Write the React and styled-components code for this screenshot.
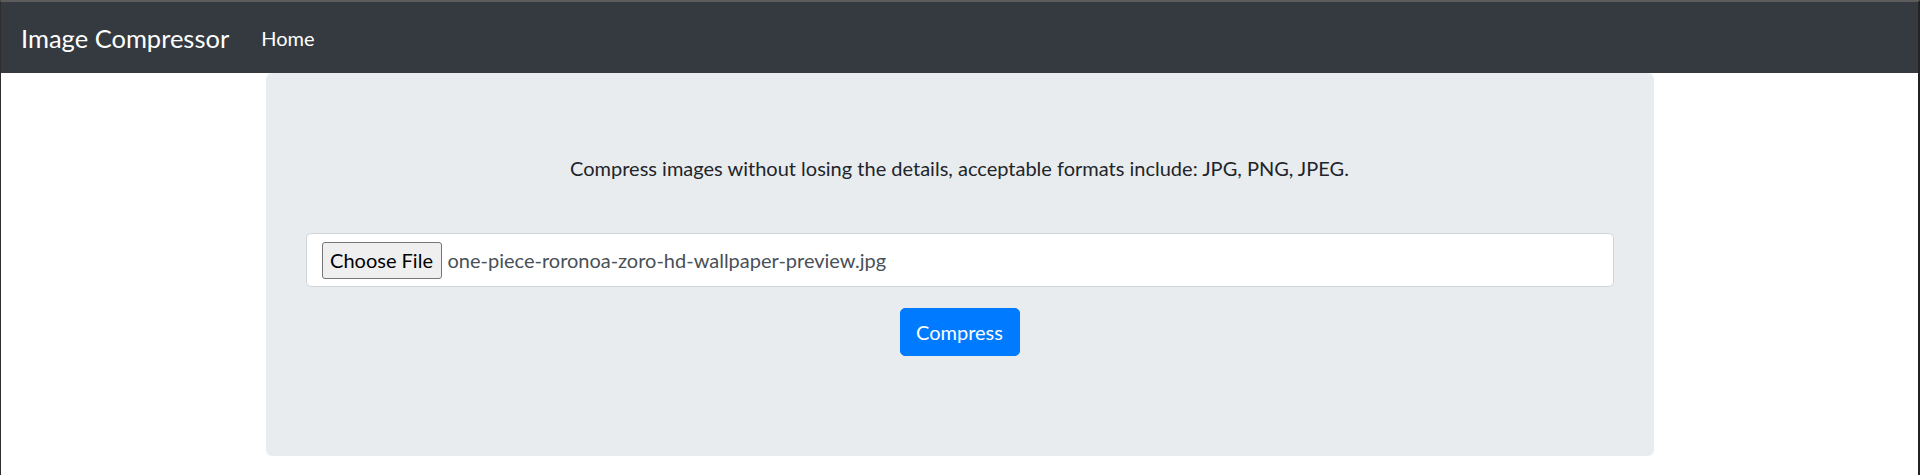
import React from 'react';
import styled, { createGlobalStyle } from 'styled-components';

const GlobalStyle = createGlobalStyle`
  html, body {
    margin: 0;
    background: #fff;
  }
  body {
    font-family: Lato, "Noto Sans", sans-serif;
    color: #212529;
  }
`;

const Frame = styled.div`
  box-sizing: border-box;
  min-height: 100vh;
  border-top: 2px solid #5c5c5c;
  border-left: 1px solid #2e2e2e;
  border-right: 2px solid #232323;
`;

const Navbar = styled.nav`
  display: flex;
  align-items: center;
  height: 71px;
  padding: 0 20px;
  background-color: #343a40;
`;

const Brand = styled.a`
  font-size: 25.5px;
  color: #fff;
  margin-right: 22px;
  text-decoration: none;
  cursor: pointer;
`;

const NavLink = styled.a`
  font-size: 20px;
  color: #fff;
  padding: 0 10px;
  text-decoration: none;
  cursor: pointer;
`;

const Jumbotron = styled.main`
  box-sizing: border-box;
  width: 1388px;
  margin: 0 auto;
  padding: 80px 40px;
  background-color: #e9ecef;
  border-radius: 6px;
  text-align: center;
`;

const Lead = styled.p`
  margin: 0 0 50px;
  font-size: 20px;
  line-height: 30px;
`;

const FileField = styled.div`
  display: flex;
  align-items: center;
  padding: 7.5px 15px;
  background: #fff;
  border: 1px solid #ced4da;
  border-radius: 5px;
`;

const ChooseButton = styled.button`
  box-sizing: border-box;
  width: 120px;
  height: 37px;
  padding: 0;
  font-family: inherit;
  font-size: 20px;
  color: #000;
  background: #efefef;
  border: 1px solid #767676;
  border-radius: 3px;
`;

const FileName = styled.span`
  margin-left: 6px;
  font-size: 20px;
  line-height: 30px;
  color: #495057;
`;

const Actions = styled.div`
  display: flex;
  justify-content: center;
  padding: 21px 0 20px;
`;

const CompressButton = styled.button`
  box-sizing: border-box;
  width: 120px;
  height: 48px;
  font-family: inherit;
  font-size: 20px;
  color: #fff;
  background-color: #007bff;
  border: 1px solid #007bff;
  border-radius: 5px;
  cursor: pointer;
`;

export default function App() {
  return (
    <>
      <GlobalStyle />
      <Frame>
        <Navbar>
          <Brand>Image Compressor</Brand>
          <NavLink>Home</NavLink>
        </Navbar>
        <Jumbotron>
          <Lead>
            Compress images without losing the details, acceptable formats include: JPG, PNG, JPEG.
          </Lead>
          <FileField>
            <ChooseButton type="button">Choose File</ChooseButton>
            <FileName>one-piece-roronoa-zoro-hd-wallpaper-preview.jpg</FileName>
          </FileField>
          <Actions>
            <CompressButton type="button">Compress</CompressButton>
          </Actions>
        </Jumbotron>
      </Frame>
    </>
  );
}
